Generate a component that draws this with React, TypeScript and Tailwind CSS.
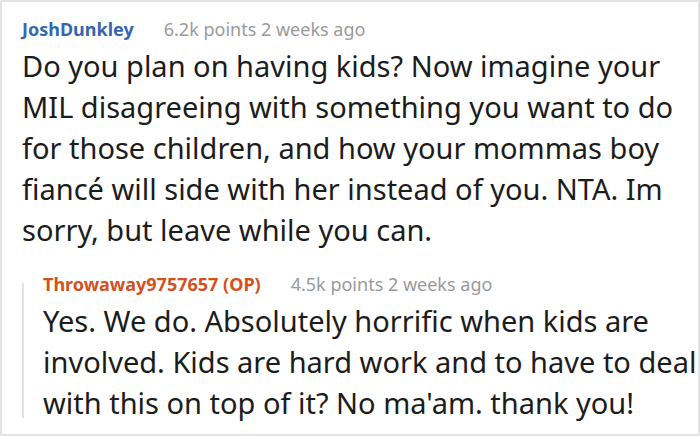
export default function App() {
  return (
    <div className="h-[436px] w-[700px] overflow-hidden border-2 border-[#e4e4e4] bg-white pl-[20px] pt-[15px] font-['Noto_Sans',sans-serif] text-[#1c1c1c]">
      <div className="flex items-baseline text-[18px] leading-[24px]">
        <span className="font-bold text-[#3567b0]">JoshDunkley</span>
        <span className="ml-[30px] text-[#9a9a9a]">6.2k points 2 weeks ago</span>
      </div>
      <p className="mt-[4px] whitespace-nowrap text-[29px] leading-[41px]">
        Do you plan on having kids? Now imagine your
        <br />
        MIL disagreeing with something you want to do
        <br />
        for those children, and how your mommas boy
        <br />
        fiancé will side with her instead of you. NTA. Im
        <br />
        sorry, but leave while you can.
      </p>

      <div className="mt-[22px] flex">
        <div className="mb-[5px] mt-[11px] w-[2px] shrink-0 bg-[#e2e2e2]" />
        <div className="pl-[19px]">
          <div className="flex items-baseline text-[18px] leading-[24px]">
            <span className="font-bold text-[#d4511e]">Throwaway9757657 (OP)</span>
            <span className="ml-[30px] text-[#9a9a9a]">4.5k points 2 weeks ago</span>
          </div>
          <p className="mt-[4px] whitespace-nowrap text-[29px] leading-[41px]">
            Yes. We do. Absolutely horrific when kids are
            <br />
            involved. Kids are hard work and to have to deal
            <br />
            with this on top of it? No ma'am. thank you!
          </p>
        </div>
      </div>
    </div>
  );
}
